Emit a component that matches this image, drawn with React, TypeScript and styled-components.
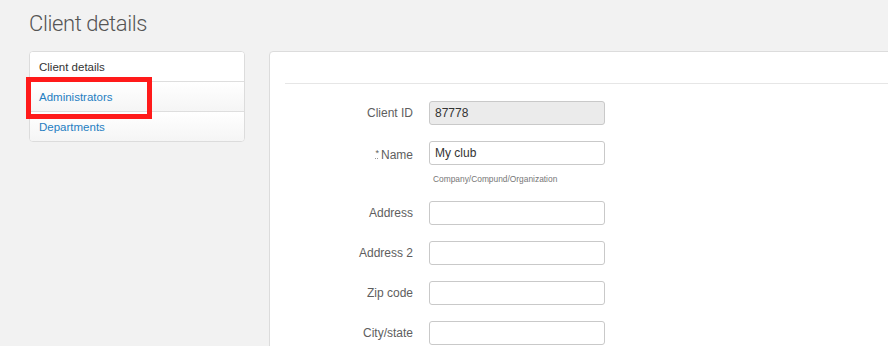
import styled, {createGlobalStyle} from "styled-components";

const GlobalStyle = createGlobalStyle`
  html, body {
    margin: 0;
    padding: 0;
    overflow: hidden;
    background: #f2f2f2;
    font-family: "Liberation Sans", Arial, sans-serif;
  }
`;

const Page = styled.div`
  position: relative;
  padding: 9px 0 0 29px;
  width: 1000px;
`;

const Title = styled.h1`
  margin: 0 0 13px;
  font-family: Roboto, "Liberation Sans", sans-serif;
  font-weight: 300;
  font-size: 22px;
  line-height: 29px;
  letter-spacing: -0.4px;
  color: #555;
`;

const Layout = styled.div`
  display: grid;
  grid-template-columns: 216px 660px;
  gap: 24px;
  align-items: start;
`;

const SideNav = styled.ul`
  list-style: none;
  margin: 0;
  padding: 0;
  background: #fff;
  border: 1px solid #dcdcdc;
  border-radius: 4px;
  overflow: hidden;
`;

const NavItem = styled.li<{ $active?: boolean }>`
  height: 29px;
  display: flex;
  align-items: center;
  padding-left: 9px;
  font-size: 11.5px;
  color: ${p => (p.$active ? "#333" : "#1f7ec2")};
  background: ${p => (p.$active ? "#fff" : "linear-gradient(#fff, #f5f5f5)")};
  border-top: 1px solid #dedede;

  &:first-child {
    border-top: none;
  }
`;

const Panel = styled.div`
  background: #fff;
  border: 1px solid #dcdcdc;
  border-radius: 4px;
  padding: 0 0 40px 15px;
`;

const PanelHead = styled.div`
  height: 31px;
  border-bottom: 1px solid #e6e6e6;
  margin-bottom: 17px;
`;

const Row = styled.div`
  display: grid;
  grid-template-columns: 128px 176px;
  column-gap: 16px;
  margin-bottom: 16px;
`;

const Label = styled.label`
  text-align: right;
  font-size: 12px;
  line-height: 24px;
  color: #5e5e5e;
`;

const Req = styled.abbr`
  font-size: 9px;
  vertical-align: 3px;
  margin-right: 2px;
  text-decoration: underline dotted #999;
  text-underline-offset: 2px;
`;

const Input = styled.input<{ $readOnly?: boolean }>`
  box-sizing: border-box;
  width: 176px;
  height: 24px;
  padding: 0 5px;
  font-family: inherit;
  font-size: 12px;
  color: #333;
  border: 1px solid #c9c9c9;
  border-radius: 3px;
  background: ${p => (p.$readOnly ? "#ebebeb" : "#fff")};
  outline: none;
`;

const Help = styled.div`
  grid-column: 2;
  padding: 6px 0 0 4px;
  font-size: 8.4px;
  line-height: 12px;
  color: #777;
`;

const Highlight = styled.div`
  position: absolute;
  left: 26px;
  top: 77px;
  width: 116px;
  height: 32px;
  border: 5px solid #ff1a1a;
  pointer-events: none;
`;

const fields = ["Address", "Address 2", "Zip code", "City/state"];

export default function App() {
  return (
    <Page>
      <GlobalStyle/>
      <Title>Client details</Title>
      <Layout>
        <SideNav>
          <NavItem $active>Client details</NavItem>
          <NavItem>Administrators</NavItem>
          <NavItem>Departments</NavItem>
        </SideNav>
        <Panel>
          <PanelHead/>
          <Row>
            <Label>Client ID</Label>
            <Input $readOnly readOnly defaultValue="87778"/>
          </Row>
          <Row>
            <Label><Req title="required">*</Req>Name</Label>
            <Input defaultValue="My club"/>
            <Help>Company/Compund/Organization</Help>
          </Row>
          {fields.map(f => (
            <Row key={f}>
              <Label>{f}</Label>
              <Input/>
            </Row>
          ))}
        </Panel>
      </Layout>
      <Highlight/>
    </Page>
  );
}
